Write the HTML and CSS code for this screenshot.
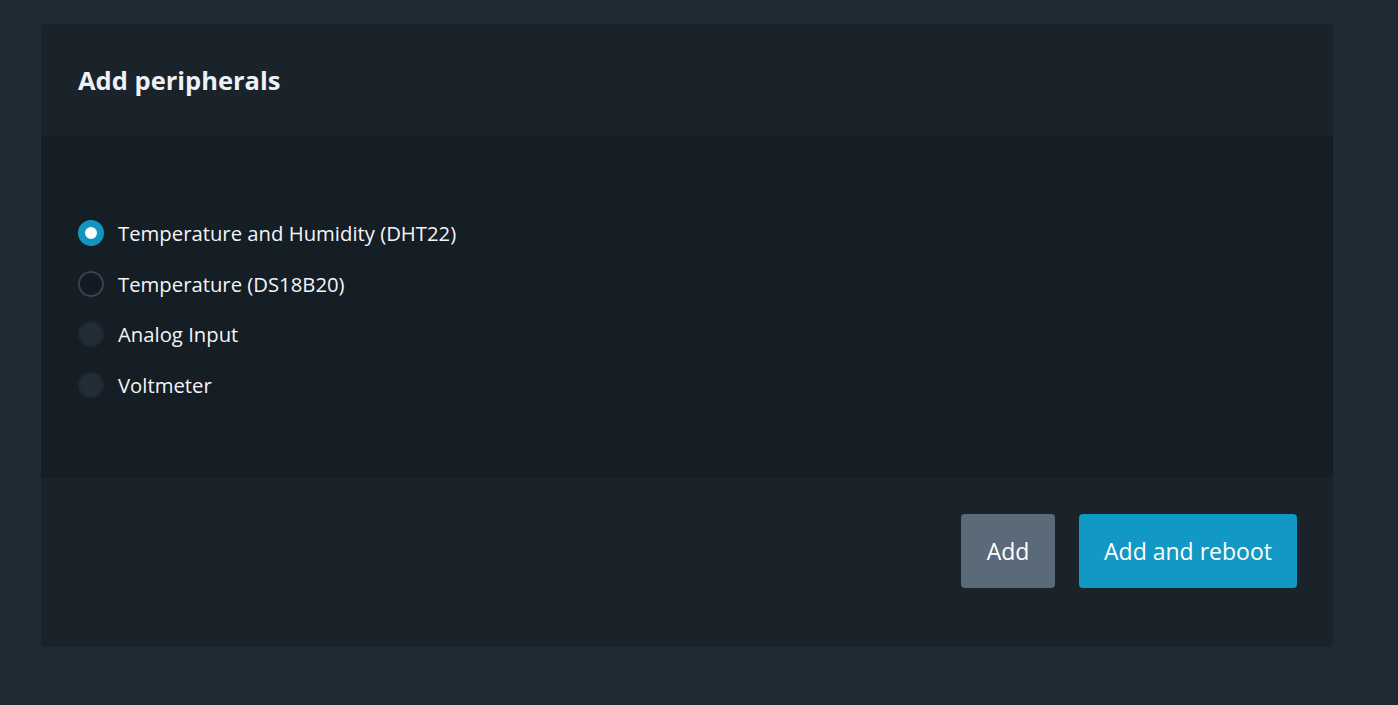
FILE: index.html
```html
<!DOCTYPE html>
<html>
<head>
<meta charset="utf-8">
<link rel="stylesheet" href="styles.css">
</head>
<body>
<div class="page">
  <section class="card">
    <header class="card-header"><h1 class="title">Add peripherals</h1></header>
    <div class="card-body">
      <label class="option"><span class="radio checked"></span><span class="label">Temperature and Humidity (DHT22)</span></label>
      <label class="option"><span class="radio outline"></span><span class="label">Temperature (DS18B20)</span></label>
      <label class="option"><span class="radio muted"></span><span class="label">Analog Input</span></label>
      <label class="option"><span class="radio muted"></span><span class="label">Voltmeter</span></label>
    </div>
    <footer class="card-footer">
      <button class="btn btn-secondary">Add</button>
      <button class="btn btn-primary">Add and reboot</button>
    </footer>
  </section>
</div>
</body>
</html>
```
FILE: styles.css
```css
html, body { margin: 0; padding: 0; }
body {
  background: #1f2a33;
  font-family: "Open Sans", "Noto Sans", sans-serif;
  color: #f1f4f7;
  width: 1398px;
  height: 705px;
  overflow: hidden;
}
.page { padding: 24px 65px 0 41px; }
.card {
  width: 1292px;
  height: 623px;
  border-radius: 5px;
  overflow: hidden;
  display: flex;
  flex-direction: column;
  background: #1a222a;
}
.card-header {
  height: 112px;
  box-sizing: border-box;
  padding: 0 37px;
  display: flex;
  align-items: center;
  background: #1a222a;
}
.title { margin: 0; font-size: 25.5px; font-weight: 700; letter-spacing: 0; color: #eef1f5; }
.card-body {
  height: 342px;
  box-sizing: border-box;
  background: #151d25;
  padding: 84px 37px 0;
  display: flex;
  flex-direction: column;
  gap: 24.5px;
}
.option { display: flex; align-items: center; gap: 14px; height: 26px; font-size: 20.3px; }
.label { color: #f3f5f8; }
.radio {
  width: 26px; height: 26px; box-sizing: border-box; border-radius: 50%;
  flex: none;
}
.radio.checked { background: #ffffff; border: 7.5px solid #1196c4; }
.radio.outline { background: #131a21; border: 2.5px solid #35434f; }
.radio.muted { background: #232d36; border: 2px solid #1f2830; }
.card-footer {
  flex: 1;
  background: #1a222a;
  display: flex;
  justify-content: flex-end;
  align-items: flex-start;
  gap: 24px;
  padding: 36px 36px 0;
}
.btn {
  height: 74px;
  border: none;
  border-radius: 4px;
  font-family: inherit;
  font-size: 23px;
  color: #ffffff;
  padding: 0;
}
.btn-secondary { width: 94px; background: #5a6a78; }
.btn-primary { width: 218px; background: #1198c4; }
```
